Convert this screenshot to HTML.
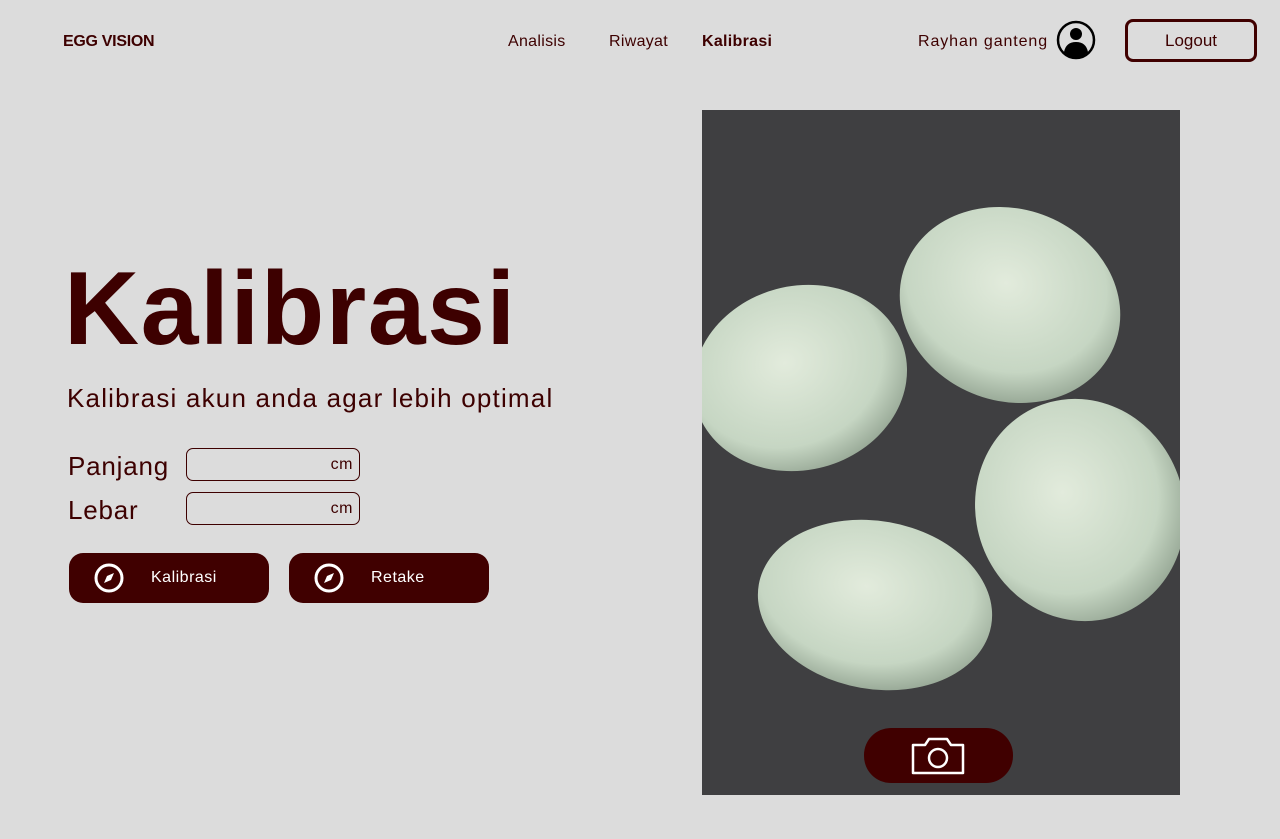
<!DOCTYPE html>
<html><head><style>
body{margin:0;width:1280px;height:839px;background:#dcdcdc;font-family:"Liberation Sans",sans-serif;color:#3d0000;position:relative;overflow:hidden}
.a{position:absolute}
.nav{font-size:16px;color:#3d0000;letter-spacing:0.3px}
.inp{position:absolute;left:186px;width:174px;height:33px;border:1px solid #3d0000;border-radius:7px;box-sizing:border-box;font-size:16px;text-align:right;padding-right:6px;line-height:32px;letter-spacing:0.5px}
.btn{position:absolute;top:553px;width:200px;height:50px;border-radius:14px;background:#400000;color:#fff;font-size:16px;letter-spacing:0.5px}
.btn span{position:absolute;left:82px;top:16px}
.btn svg{position:absolute;left:25px;top:10px}
</style></head><body>
<div class="a" style="left:63px;top:33px;font-weight:bold;font-size:16px;letter-spacing:-0.3px">EGG VISION</div>
<div class="a nav" style="left:508px;top:33px">Analisis</div>
<div class="a nav" style="left:609px;top:33px">Riwayat</div>
<div class="a nav" style="left:702px;top:33px;font-weight:bold">Kalibrasi</div>
<div class="a nav" style="left:918px;top:33px;letter-spacing:0.9px">Rayhan ganteng</div>
<svg class="a" style="left:1056px;top:20px" width="40" height="40" viewBox="0 0 40 40"><circle cx="20" cy="20" r="18" fill="none" stroke="#000" stroke-width="2.5"/><circle cx="20" cy="14" r="6" fill="#000"/><path d="M8 32 Q10 22 20 22 Q30 22 32 32 Q26 38 20 38 Q14 38 8 32Z" fill="#000"/></svg>
<div class="a" style="left:1125px;top:19px;width:132px;height:43px;border:3px solid #400000;border-radius:8px;box-sizing:border-box;text-align:center;line-height:38px;font-size:17px">Logout</div>
<div class="a" style="left:64px;top:250px;font-size:104px;font-weight:bold;letter-spacing:1.5px">Kalibrasi</div>
<div class="a" style="left:67px;top:383px;font-size:26px;letter-spacing:1.2px">Kalibrasi akun anda agar lebih optimal</div>
<div class="a" style="left:68px;top:451px;font-size:26px;letter-spacing:0.8px">Panjang</div>
<div class="a" style="left:68px;top:495px;font-size:26px;letter-spacing:0.8px">Lebar</div>
<div class="inp" style="top:448px">cm</div>
<div class="inp" style="top:492px">cm</div>
<div class="btn" style="left:69px"><svg width="30" height="30" viewBox="0 0 30 30"><circle cx="15" cy="15" r="13" fill="none" stroke="#fff" stroke-width="3"/><path d="M10 20 L13 13 L20 10 L17 17Z" fill="#fff"/></svg><span>Kalibrasi</span></div>
<div class="btn" style="left:289px"><svg width="30" height="30" viewBox="0 0 30 30"><circle cx="15" cy="15" r="13" fill="none" stroke="#fff" stroke-width="3"/><path d="M10 20 L13 13 L20 10 L17 17Z" fill="#fff"/></svg><span>Retake</span></div>
<svg class="a" style="left:702px;top:110px" width="478" height="685" viewBox="702 110 478 685">
<defs><radialGradient id="g" cx="0.45" cy="0.4" r="0.65"><stop offset="0" stop-color="#e2ebdc"/><stop offset="0.7" stop-color="#c6d6c3"/><stop offset="1" stop-color="#8fa08e"/></radialGradient></defs>
<rect x="702" y="110" width="478" height="685" fill="#3f3f41"/>
<ellipse cx="800" cy="378" rx="108" ry="92" transform="rotate(-15 800 378)" fill="url(#g)"/>
<ellipse cx="1010" cy="305" rx="112" ry="96" transform="rotate(20 1010 305)" fill="url(#g)"/>
<ellipse cx="1080" cy="510" rx="104" ry="112" transform="rotate(-20 1080 510)" fill="url(#g)"/>
<ellipse cx="875" cy="605" rx="118" ry="84" transform="rotate(10 875 605)" fill="url(#g)"/>
<rect x="864" y="728" width="149" height="55" rx="27" fill="#400000"/>
<path d="M913 745 h12 l4 -6 h18 l4 6 h12 v28 h-50z" fill="none" stroke="#fff" stroke-width="2.5" stroke-linejoin="round"/>
<circle cx="938" cy="758" r="9" fill="none" stroke="#fff" stroke-width="2.5"/>
</svg>
</body></html>
